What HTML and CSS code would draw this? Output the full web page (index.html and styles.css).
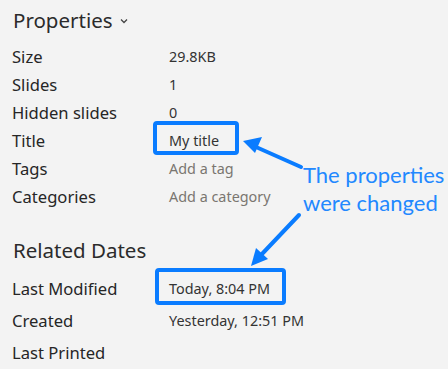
FILE: index.html
```html
<!DOCTYPE html>
<html>
<head>
<meta charset="utf-8">
<link rel="stylesheet" href="styles.css">
</head>
<body>
<div class="page">
  <h2 class="heading">Properties <svg class="chev" width="8" height="6" viewBox="0 0 8 6"><path d="M1 1.5 L4 4.5 L7 1.5" fill="none" stroke="#444" stroke-width="1.3"/></svg></h2>
  <div class="props">
    <div class="label">Size</div><div class="value">29.8KB</div>
    <div class="label">Slides</div><div class="value">1</div>
    <div class="label">Hidden slides</div><div class="value">0</div>
    <div class="label">Title</div><div class="value">My title</div>
    <div class="label">Tags</div><div class="value hint">Add a tag</div>
    <div class="label">Categories</div><div class="value hint">Add a category</div>
  </div>
  <h2 class="heading section">Related Dates</h2>
  <div class="props dates">
    <div class="label">Last Modified</div><div class="value">Today, 8:04 PM</div>
    <div class="label">Created</div><div class="value">Yesterday, 12:51 PM</div>
    <div class="label">Last Printed</div><div class="value"></div>
  </div>

  <svg class="overlay" width="448" height="369" viewBox="0 0 448 369">
    <rect x="155" y="123" width="82" height="30" rx="2" fill="none" stroke="#0a7cff" stroke-width="4"/>
    <rect x="157" y="270" width="127" height="33" rx="2" fill="none" stroke="#0a7cff" stroke-width="4"/>
    <line x1="301" y1="167" x2="256" y2="147" stroke="#0a7cff" stroke-width="4" stroke-linecap="round"/>
    <polygon points="243,141 262,137 255,153" fill="#0a7cff"/>
    <line x1="299" y1="215" x2="262" y2="254" stroke="#0a7cff" stroke-width="4" stroke-linecap="round"/>
    <polygon points="251,266 256,248 268,259" fill="#0a7cff"/>
  </svg>
  <div class="note">The properties<br>were changed</div>
</div>
</body>
</html>
```

FILE: styles.css
```css
html, body {
  margin: 0;
  padding: 0;
  background: #f3f3f3;
}
.page {
  position: relative;
  width: 448px;
  height: 369px;
  overflow: hidden;
  font-family: "Noto Sans", "Open Sans", sans-serif;
  color: #262626;
}
.heading {
  margin: 0 0 2px 0;
  padding-left: 13px;
  height: 40px;
  line-height: 40px;
  font-size: 20.5px;
  font-weight: 400;
  color: #2b2b2b;
  display: flex;
  align-items: center;
  gap: 7px;
}
.heading.section {
  margin-top: 20px;
}
.chev {
  margin-top: 2px;
}
.props {
  display: grid;
  grid-template-columns: 157px 1fr;
  grid-auto-rows: 28px;
  padding-left: 12px;
  align-items: center;
}
.props.dates {
  grid-auto-rows: 32px;
}
.label {
  font-size: 16.6px;
  color: #262626;
}
.value {
  font-size: 14.4px;
  color: #333;
}
.value.hint {
  color: #7a7670;
}
.overlay {
  position: absolute;
  left: 0;
  top: 0;
}
.note {
  position: absolute;
  left: 303px;
  top: 161px;
  font-family: Lato, "Open Sans", sans-serif;
  font-size: 22px;
  line-height: 28px;
  color: #2288ff;
}
```
